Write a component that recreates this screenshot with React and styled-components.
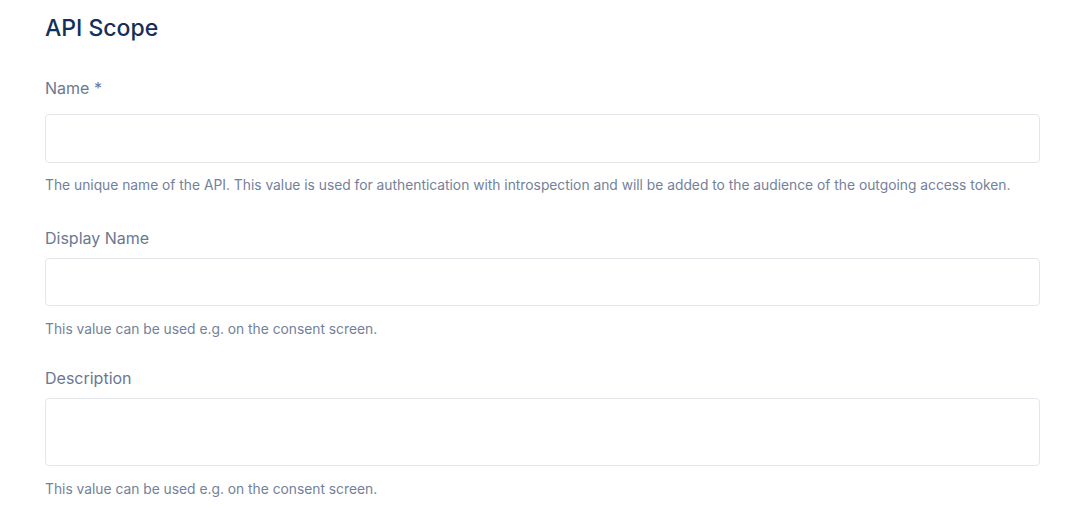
import React from "react";
import styled, { createGlobalStyle } from "styled-components";

const GlobalStyle = createGlobalStyle`
  body {
    margin: 0;
    background: #fff;
    font-family: Inter, "Noto Sans", sans-serif;
  }
`;

const Page = styled.div`
  padding: 14px 40px 0 45px;
`;

const Title = styled.h2`
  margin: 0 0 36px;
  font-size: 23px;
  line-height: 28px;
  font-weight: 500;
  color: #12305a;
`;

const Field = styled.div`
  display: flex;
  flex-direction: column;
  margin-bottom: ${(p) => p.space || 0}px;
`;

const Label = styled.label`
  font-size: 16px;
  line-height: 20px;
  color: #6b7890;
  margin-bottom: ${(p) => p.gap}px;
`;

const Input = styled.input`
  box-sizing: border-box;
  width: 100%;
  height: ${(p) => p.h}px;
  border: 1px solid #e3e6ea;
  border-radius: 4px;
  padding: 0 12px;
  font-family: inherit;
  font-size: 14px;
  outline: 0;
`;

const TextArea = styled.textarea`
  box-sizing: border-box;
  width: 100%;
  height: 68px;
  border: 1px solid #e3e6ea;
  border-radius: 4px;
  padding: 8px 12px;
  font-family: inherit;
  font-size: 14px;
  resize: none;
  outline: 0;
  display: block;
`;

const Help = styled.p`
  margin: ${(p) => p.top}px 0 0;
  font-size: 13.8px;
  line-height: 16px;
  color: #74819a;
`;

export default function App() {
  return (
    <>
      <GlobalStyle />
      <Page>
        <Title>API Scope</Title>
        <Field space={35}>
          <Label gap={16}>Name *</Label>
          <Input h={49} />
          <Help top={14}>
            The unique name of the API. This value is used for authentication with introspection and will be added to the audience of the outgoing access token.
          </Help>
        </Field>
        <Field space={31}>
          <Label gap={10}>Display Name</Label>
          <Input h={48} />
          <Help top={15}>This value can be used e.g. on the consent screen.</Help>
        </Field>
        <Field>
          <Label gap={10}>Description</Label>
          <TextArea />
          <Help top={15}>This value can be used e.g. on the consent screen.</Help>
        </Field>
      </Page>
    </>
  );
}
